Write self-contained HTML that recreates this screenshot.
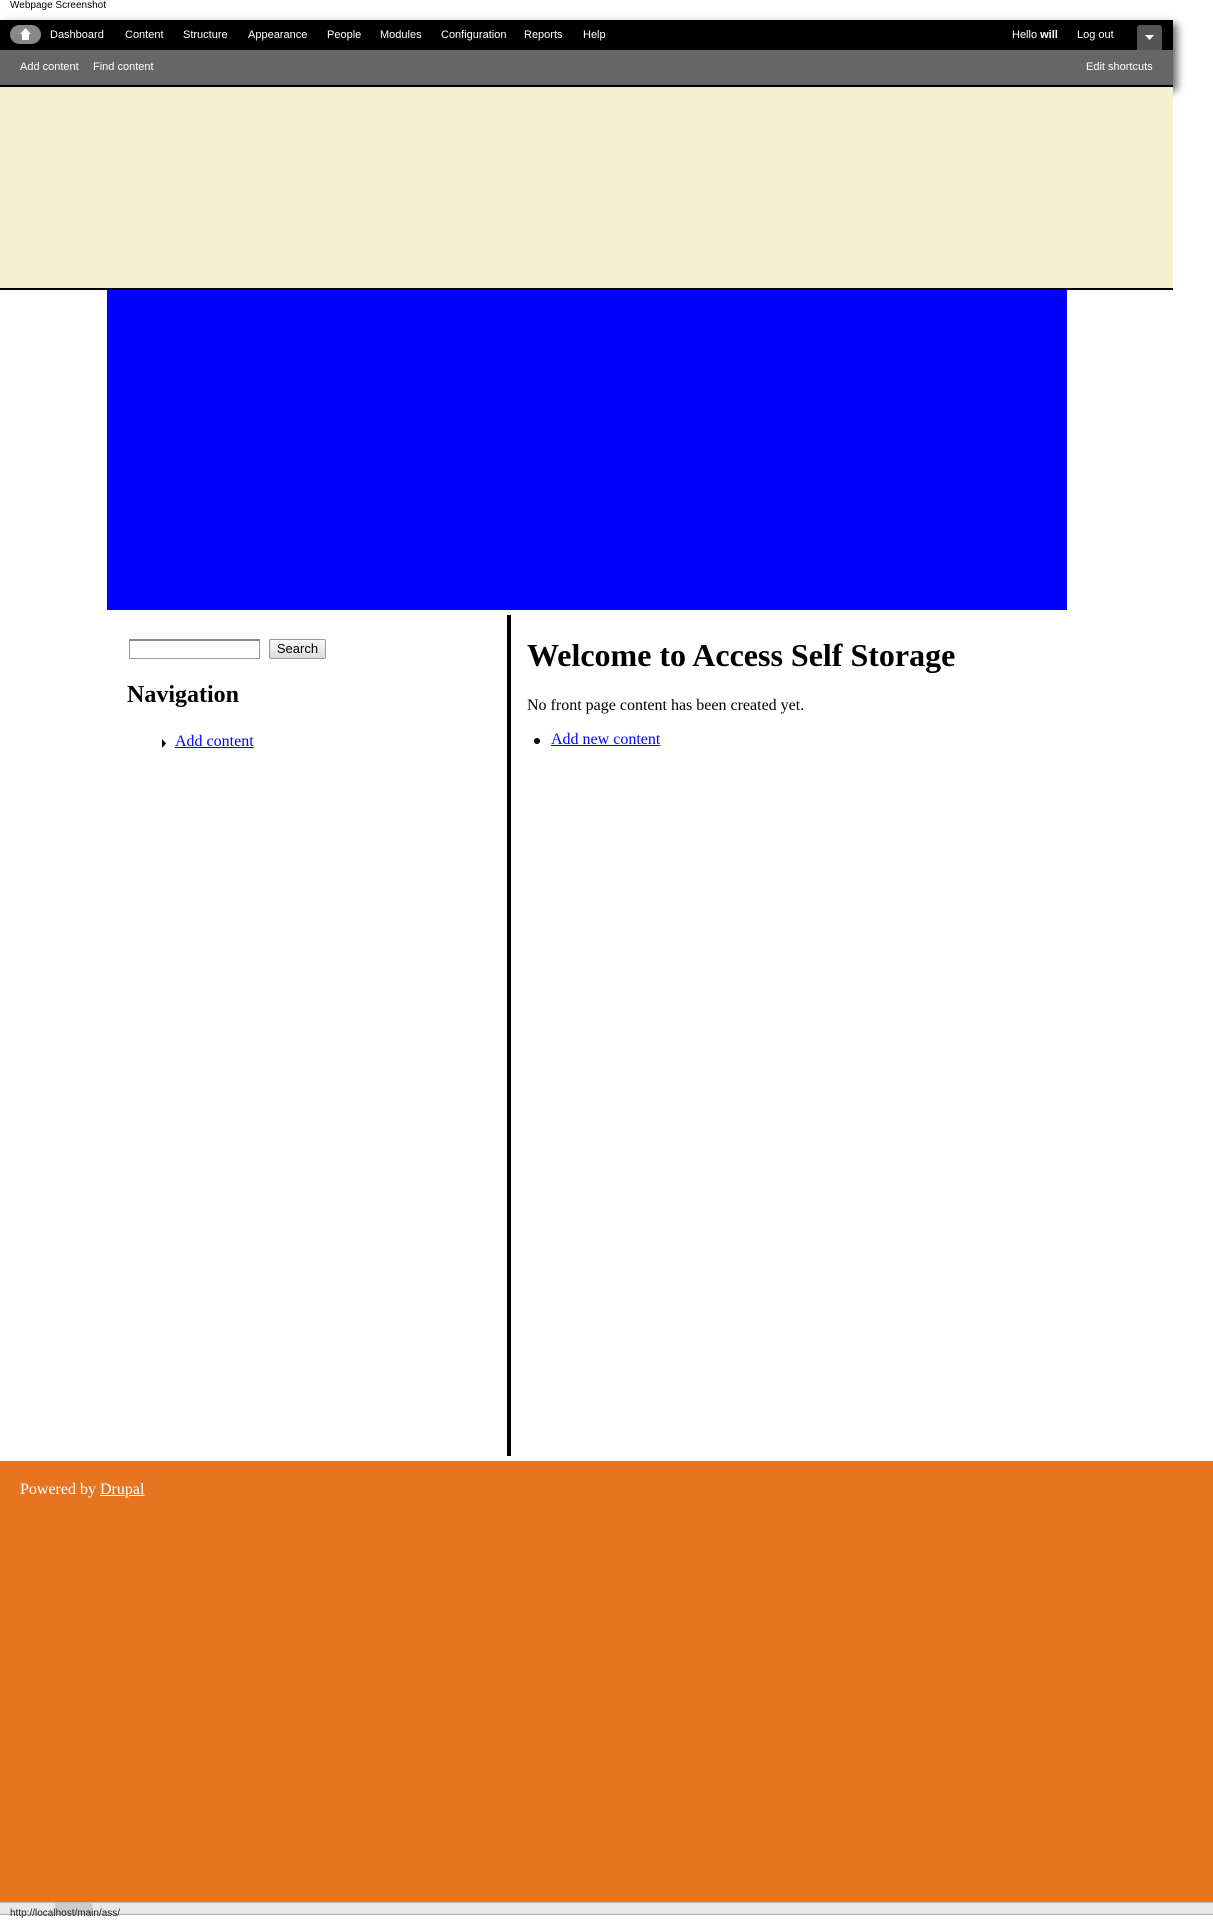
<!DOCTYPE html>
<html><head><meta charset="utf-8"><style>
*{margin:0;padding:0;box-sizing:border-box}
body{width:1213px;height:1921px;position:relative;background:#fff;font-family:"Liberation Serif",serif;overflow:hidden}
.a{position:absolute}
.s{font-family:"Liberation Sans",sans-serif;font-size:11px;color:#fff;white-space:nowrap}
</style></head><body>
<div class="a s" style="left:10px;top:0;color:#000;font-size:10px">Webpage Screenshot</div>
<div class="a" style="left:0;top:20px;width:1173px;height:67px;box-shadow:4px 4px 8px rgba(0,0,0,.6);background:#000"></div>
<div class="a" style="left:0;top:20px;width:1173px;height:30px;background:#000"></div>
<div class="a" style="left:0;top:50px;width:1173px;height:35px;background:#666"></div>
<div class="a" style="left:0;top:85px;width:1173px;height:2px;background:#000"></div>
<div class="a" style="left:10px;top:25px;width:31px;height:19px;border-radius:10px;background:#888"></div>
<svg class="a" style="left:19px;top:27px" width="13" height="14"><path d="M6.5 1L1 7h2v6h7V7h2z" fill="#fff"/></svg>
<div class="a s" style="left:50px;top:29px">Dashboard</div>
<div class="a s" style="left:125px;top:29px">Content</div>
<div class="a s" style="left:183px;top:29px">Structure</div>
<div class="a s" style="left:248px;top:29px">Appearance</div>
<div class="a s" style="left:327px;top:29px">People</div>
<div class="a s" style="left:380px;top:29px">Modules</div>
<div class="a s" style="left:441px;top:29px">Configuration</div>
<div class="a s" style="left:524px;top:29px">Reports</div>
<div class="a s" style="left:583px;top:29px">Help</div>
<div class="a s" style="left:1012px;top:29px">Hello <b>will</b></div>
<div class="a s" style="left:1077px;top:29px">Log out</div>
<div class="a" style="left:1137px;top:25px;width:25px;height:25px;background:#555;border-radius:3px 3px 0 0"></div>
<svg class="a" style="left:1145px;top:35px" width="9" height="6"><path d="M0 0h9L4.5 5z" fill="#fff"/></svg>
<div class="a s" style="left:20px;top:61px">Add content</div>
<div class="a s" style="left:93px;top:61px">Find content</div>
<div class="a s" style="left:1086px;top:61px">Edit shortcuts</div>
<div class="a" style="left:0;top:87px;width:1173px;height:201px;background:#f7f0d0"></div>
<div class="a" style="left:0;top:288px;width:1173px;height:2px;background:#000"></div>
<div class="a" style="left:107px;top:290px;width:960px;height:320px;background:#00f"></div>
<div class="a" style="left:507px;top:615px;width:4px;height:841px;background:#000"></div>
<div class="a" style="left:129px;top:639px;width:131px;height:20px;border:1px solid #999;border-top:2px solid #888;background:#fff"></div>
<div class="a" style="left:269px;top:639px;width:57px;height:20px;border:1px solid #999;border-radius:2px;background:linear-gradient(#f8f8f8,#ddd);font-family:'Liberation Sans',sans-serif;font-size:13px;text-align:center;line-height:18px">Search</div>
<div class="a" style="left:127px;top:682px;font-size:24px;font-weight:bold">Navigation</div>
<svg class="a" style="left:162px;top:739px" width="5" height="9"><path d="M0 0l4 4.5L0 9z" fill="#000"/></svg>
<div class="a" style="left:175px;top:733px;font-size:16px;color:#00f;text-decoration:underline">Add content</div>
<div class="a" style="left:527px;top:637px;font-size:32px;font-weight:bold">Welcome to Access Self Storage</div>
<div class="a" style="left:527px;top:697px;font-size:16px">No front page content has been created yet.</div>
<div class="a" style="left:534px;top:738px;width:6px;height:6px;border-radius:50%;background:#000"></div>
<div class="a" style="left:551px;top:731px;font-size:16px;color:#00f;text-decoration:underline">Add new content</div>
<div class="a" style="left:0;top:1461px;width:1213px;height:441px;background:#e7751f"></div>
<div class="a" style="left:20px;top:1481px;font-size:16px;color:#fff">Powered by <u>Drupal</u></div>
<div class="a" style="left:0;top:1902px;width:1213px;height:13px;background:#e8e8e8;border-top:1px solid #bbb;border-bottom:1px solid #aaa"></div>
<div class="a" style="left:55px;top:1903px;width:37px;height:11px;background:#ccc"></div>
<div class="a" style="left:10px;top:1908px;font-family:'Liberation Sans',sans-serif;font-size:10px;color:#222">http://localhost/main/ass/</div>
</body></html>
